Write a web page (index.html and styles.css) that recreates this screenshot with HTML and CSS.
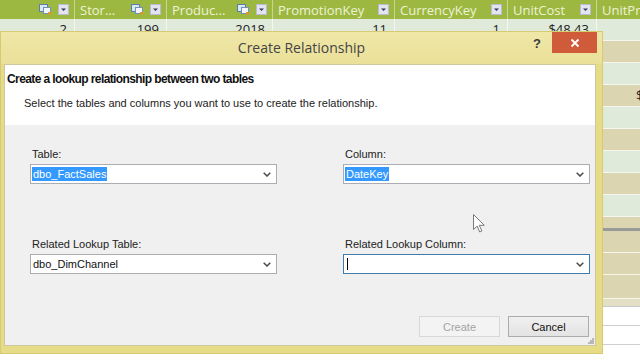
FILE: index.html
```html
<!DOCTYPE html>
<html>
<head>
<meta charset="utf-8">
<title>Create Relationship</title>
<link rel="stylesheet" href="styles.css">
</head>
<body>
<div class="sheet">
  <div class="hdr">
    <div class="hc w1"><span class="hname"></span>
      <svg class="rel" width="13" height="11" viewBox="0 0 13 11"><rect x="0.5" y="0.5" width="8" height="7" fill="#dbe6f3" stroke="#5a80ad"/><rect x="4.5" y="3.5" width="7" height="6" fill="#f4f7fb" stroke="#7093bd"/><path d="M9 8h3v2.5H9z" fill="#e0962c"/></svg>
      <svg class="dd" width="11" height="11" viewBox="0 0 11 11"><rect x="0.5" y="0.5" width="10" height="10" fill="#e3e4ef" stroke="#b9bbd0"/><path d="M3 4.5h5L5.5 7z" fill="#333a5a"/></svg>
    </div>
    <div class="hc w2"><span class="hname">Stor...</span>
      <svg class="rel" width="13" height="11" viewBox="0 0 13 11"><rect x="0.5" y="0.5" width="8" height="7" fill="#dbe6f3" stroke="#5a80ad"/><rect x="4.5" y="3.5" width="7" height="6" fill="#f4f7fb" stroke="#7093bd"/><path d="M9 8h3v2.5H9z" fill="#e0962c"/></svg>
      <svg class="dd" width="11" height="11" viewBox="0 0 11 11"><rect x="0.5" y="0.5" width="10" height="10" fill="#e3e4ef" stroke="#b9bbd0"/><path d="M3 4.5h5L5.5 7z" fill="#333a5a"/></svg>
    </div>
    <div class="hc w3"><span class="hname">Produc...</span>
      <svg class="rel" width="13" height="11" viewBox="0 0 13 11"><rect x="0.5" y="0.5" width="8" height="7" fill="#dbe6f3" stroke="#5a80ad"/><rect x="4.5" y="3.5" width="7" height="6" fill="#f4f7fb" stroke="#7093bd"/><path d="M9 8h3v2.5H9z" fill="#e0962c"/></svg>
      <svg class="dd" width="11" height="11" viewBox="0 0 11 11"><rect x="0.5" y="0.5" width="10" height="10" fill="#e3e4ef" stroke="#b9bbd0"/><path d="M3 4.5h5L5.5 7z" fill="#333a5a"/></svg>
    </div>
    <div class="hc w4"><span class="hname">PromotionKey</span>
      <svg class="dd" width="11" height="11" viewBox="0 0 11 11"><rect x="0.5" y="0.5" width="10" height="10" fill="#e3e4ef" stroke="#b9bbd0"/><path d="M3 4.5h5L5.5 7z" fill="#333a5a"/></svg>
    </div>
    <div class="hc w5"><span class="hname">CurrencyKey</span>
      <svg class="dd" width="11" height="11" viewBox="0 0 11 11"><rect x="0.5" y="0.5" width="10" height="10" fill="#e3e4ef" stroke="#b9bbd0"/><path d="M3 4.5h5L5.5 7z" fill="#333a5a"/></svg>
    </div>
    <div class="hc w6"><span class="hname">UnitCost</span>
      <svg class="dd" width="11" height="11" viewBox="0 0 11 11"><rect x="0.5" y="0.5" width="10" height="10" fill="#e3e4ef" stroke="#b9bbd0"/><path d="M3 4.5h5L5.5 7z" fill="#333a5a"/></svg>
    </div>
    <div class="hc w7"><span class="hname">UnitPrice</span></div>
  </div>
  <div class="row g">
    <div class="cell w1">2</div>
    <div class="cell w2">199</div>
    <div class="cell w3">2018</div>
    <div class="cell w4">11</div>
    <div class="cell w5">1</div>
    <div class="cell w6">$48.43</div>
    <div class="cell w7"></div>
  </div>
  <div class="row b"></div>
  <div class="row g"></div>
  <div class="row b"><span class="peek">$</span></div>
  <div class="row g"></div>
  <div class="row b"></div>
  <div class="row g"></div>
  <div class="row b"></div>
  <div class="row g"></div>
  <div class="row b short"></div>
  <div class="divider"></div>
  <div class="row b"></div>
  <div class="row b"></div>
  <div class="row b tall"></div>
  <div class="row pale"></div>
  <div class="row w"></div>
  <div class="row w"></div>
</div>

<div class="dialog">
  <div class="titlebar">
    <span></span>
    <span class="title">Create Relationship</span>
    <div class="tb-right">
      <span class="help">?</span>
      <span class="close"><svg width="10" height="10" viewBox="0 0 10 10"><path d="M1.5 1.5l7 7M8.5 1.5l-7 7" stroke="#fff" stroke-width="1.8"/></svg></span>
    </div>
  </div>
  <div class="content">
    <div class="intro">
      <div class="heading">Create a lookup relationship between two tables</div>
      <div class="sub">Select the tables and columns you want to use to create the relationship.</div>
    </div>
    <div class="form">
      <div class="field">
        <label class="lbl">Table:</label>
        <div class="combo"><span class="val sel">dbo_FactSales</span>
          <svg class="chev" width="8" height="5" viewBox="0 0 8 5"><path d="M0.7 0.7L4 4l3.3-3.3" fill="none" stroke="#4a4a4a" stroke-width="1.5"/></svg></div>
      </div>
      <div class="field">
        <label class="lbl">Column:</label>
        <div class="combo"><span class="val sel">DateKey</span>
          <svg class="chev" width="8" height="5" viewBox="0 0 8 5"><path d="M0.7 0.7L4 4l3.3-3.3" fill="none" stroke="#4a4a4a" stroke-width="1.5"/></svg></div>
      </div>
      <div class="field">
        <label class="lbl">Related Lookup Table:</label>
        <div class="combo"><span class="val">dbo_DimChannel</span>
          <svg class="chev" width="8" height="5" viewBox="0 0 8 5"><path d="M0.7 0.7L4 4l3.3-3.3" fill="none" stroke="#4a4a4a" stroke-width="1.5"/></svg></div>
      </div>
      <div class="field">
        <label class="lbl">Related Lookup Column:</label>
        <div class="combo focus"><span class="val"><span class="caret"></span></span>
          <svg class="chev" width="8" height="5" viewBox="0 0 8 5"><path d="M0.7 0.7L4 4l3.3-3.3" fill="none" stroke="#4a4a4a" stroke-width="1.5"/></svg></div>
      </div>
    </div>
    <div class="buttons">
      <button class="btn disabled">Create</button>
      <button class="btn">Cancel</button>
    </div>
    <svg class="grip" width="6" height="6" viewBox="0 0 6 6"><g fill="#b8b8b8"><rect x="4" y="0" width="2" height="2"/><rect x="2" y="2" width="2" height="2"/><rect x="4" y="2" width="2" height="2"/><rect x="0" y="4" width="2" height="2"/><rect x="2" y="4" width="2" height="2"/><rect x="4" y="4" width="2" height="2"/></g></svg>
  </div>
</div>

<svg class="cursor" width="12" height="19" viewBox="0 0 12 19"><path d="M0.5 0.5v15l3.6-3.4 2.6 5.9 2.2-1-2.6-5.7h5z" fill="#fff" stroke="#7a7a7a" stroke-width="1"/></svg>
</body>
</html>
```

FILE: styles.css
```css
* { box-sizing: border-box; margin: 0; padding: 0; }
html, body { width: 640px; height: 360px; overflow: hidden; background: #ffffff; }
body { position: relative; font-family: "Liberation Sans", Arial, sans-serif; }

/* background spreadsheet */
.sheet { width: 720px; display: flex; flex-direction: column; font-family: "Open Sans", "Liberation Sans", sans-serif; font-size: 13px; }
.hdr { display: flex; height: 19px; background: #9db841; color: #edf2d6; }
.hc { display: flex; align-items: center; gap: 6px; padding: 0 5px 0 5px; border-right: 1px solid #c6d793; overflow: hidden; white-space: nowrap; }
.hname { flex: 1; overflow: hidden; }
.dd, .rel { flex: none; }
.w1 { width: 75px; flex: none; }
.w2 { width: 92px; flex: none; }
.w3 { width: 106px; flex: none; }
.w4 { width: 122px; flex: none; }
.w5 { width: 113px; flex: none; }
.w6 { width: 89px; flex: none; }
.w7 { width: 123px; flex: none; border-right: 0; }

.row { display: flex; height: 22px; border-bottom: 1px solid #f6f6ee; flex: none; }
.row.g { background: #dfeadb; }
.row.b { background: #dbd5b2; }
.row.short { height: 11px; border-bottom: 0; }
.row.tall { height: 24px; }
.row.pale { background: #e3dfc4; height: 8px; border-bottom: 1px solid #c9c9c9; }
.row.w { background: #ffffff; border-bottom: 1px solid #cfcfcf; height: 19px; }
.divider { height: 3px; background: #9a9a96; flex: none; }
.cell { text-align: right; padding-right: 7px; line-height: 21px; color: #222; border-right: 1px solid #f6f6ee; }
.peek { margin-left: 636px; line-height: 21px; color: #222; }

/* dialog window */
.dialog { position: absolute; left: 0; top: 31px; width: 603px; height: 323px; background: #e6db87; border: 1px solid #d6ca72; padding: 0 6px 7px 3px; display: flex; flex-direction: column; }
.titlebar { height: 32px; margin: 0 -6px 0 -3px; display: grid; grid-template-columns: 1fr auto 1fr; align-items: start; background: linear-gradient(#efe7a7, #eae09a); }
.title { font-family: "Open Sans", "Liberation Sans", sans-serif; font-size: 14px; color: #444; line-height: 32px; }
.tb-right { display: flex; justify-content: flex-end; align-items: flex-start; padding-right: 5px; }
.help { font-family: "Liberation Sans", Arial, sans-serif; font-weight: bold; font-size: 13px; color: #3a3a3a; line-height: 24px; margin-right: 11px; }
.close { width: 45px; height: 21px; background: #cf5b3b; display: flex; align-items: center; justify-content: center; }

.content { flex: 1; position: relative; background: #f0f0f0; border: 1px solid #cfc7a0; display: flex; flex-direction: column; }
.intro { height: 60px; background: #ffffff; padding: 7px 0 0 2px; }
.heading { font-weight: bold; font-size: 12px; line-height: 14px; letter-spacing: -0.6px; color: #111; }
.sub { font-size: 11px; line-height: 14px; margin: 10px 0 0 17px; color: #222; }

.form { display: grid; grid-template-columns: 247px 247px; column-gap: 66px; row-gap: 53px; padding: 22px 0 0 25px; }
.field { display: flex; flex-direction: column; }
.lbl { font-size: 11px; line-height: 14px; color: #222; margin: 0 0 3px 2px; }
.combo { height: 20px; border: 1px solid #abadb3; background: #fff; display: flex; align-items: center; justify-content: space-between; padding: 0 5px 0 1px; }
.combo.focus { border-color: #3d7bad; }
.val { font-size: 11px; line-height: 14px; color: #111; padding: 0 1px; display: flex; align-items: center; min-height: 14px; }
.val.sel { background: #3399ff; color: #fff; }
.caret { width: 1px; height: 12px; background: #000; display: block; margin-left: 1px; }
.chev { flex: none; }

.buttons { display: flex; justify-content: flex-end; gap: 8px; padding-right: 6px; margin-top: 42px; }
.btn { width: 81px; height: 21px; font-family: "Liberation Sans", Arial, sans-serif; font-size: 11px; color: #111; border: 1px solid #acacac; background: linear-gradient(#f0f0f0, #e3e3e3); }
.btn.disabled { color: #a3a3a3; border-color: #d8d8d8; background: #f3f3f3; }
.grip { position: absolute; right: 1px; bottom: 1px; }

.cursor { position: absolute; left: 473px; top: 214px; }
```
